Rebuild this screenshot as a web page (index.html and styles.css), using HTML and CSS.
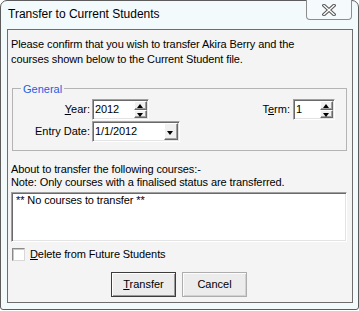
FILE: index.html
```html
<!DOCTYPE html>
<html>
<head>
<meta charset="utf-8">
<link rel="stylesheet" href="styles.css">
</head>
<body>
<div class="window">
  <div class="titlebar">
    <span class="title">Transfer to Current Students</span>
    <div class="close">
      <svg width="14" height="12" viewBox="0 0 14 12">
        <path d="M2 1.5 L12 10.5 M12 1.5 L2 10.5" stroke="#5a5a5a" stroke-width="3.6" stroke-linecap="square" fill="none"/>
        <path d="M2 1.5 L12 10.5 M12 1.5 L2 10.5" stroke="#ffffff" stroke-width="1.4" stroke-linecap="square" fill="none"/>
      </svg>
    </div>
  </div>
  <div class="client">
    <p class="intro">Please confirm that you wish to transfer Akira Berry and the<br>courses shown below to the Current Student file.</p>
    <fieldset class="group">
      <legend>General</legend>
      <div class="row">
        <span class="lbl"><u>Y</u>ear:</span>
        <div class="spin year">
          <span class="val">2012</span>
          <div class="spinbtns">
            <span class="sb up"></span>
            <span class="sb down"></span>
          </div>
        </div>
        <div class="term">
          <span class="tlbl">T<u>e</u>rm:</span>
          <div class="spin termbox">
            <span class="val">1</span>
            <div class="spinbtns">
              <span class="sb up"></span>
              <span class="sb down"></span>
            </div>
          </div>
        </div>
      </div>
      <div class="row row2">
        <span class="lbl">Entry Date:</span>
        <div class="combo">
          <span class="val">1/1/2012</span>
          <span class="dropbtn"></span>
        </div>
      </div>
    </fieldset>
    <p class="note">About to transfer the following courses:-<br>Note: Only courses with a finalised status are transferred.</p>
    <div class="listbox">** No courses to transfer **</div>
    <div class="check">
      <span class="box"></span>
      <span class="clbl"><u>D</u>elete from Future Students</span>
    </div>
    <div class="buttons">
      <div class="btn default"><span><u>T</u>ransfer</span></div>
      <div class="btn"><span>Cancel</span></div>
    </div>
  </div>
</div>
</body>
</html>
```
FILE: styles.css
```css
html, body {
  margin: 0;
  padding: 0;
  background: #ffffff;
}
body {
  font-family: "Liberation Sans", Arial, sans-serif;
  font-size: 11px;
  color: #000;
}
.window {
  width: 359px;
  height: 310px;
  box-sizing: border-box;
  border: 1px solid #5c5c5c;
  border-radius: 7px 7px 3px 3px;
  background: #f3fafc;
  padding: 0 5px 6px 6px;
  display: flex;
  flex-direction: column;
}
.titlebar {
  height: 28px;
  display: flex;
  align-items: flex-start;
  margin: 0 -5px 0 -6px;
  padding: 0 6px 0 7px;
}
.title {
  font-size: 12px;
  line-height: 15px;
  padding-top: 6px;
}
.close {
  margin-left: auto;
  margin-top: -1px;
  width: 46px;
  height: 20px;
  box-sizing: border-box;
  border: 1px solid #8d8d8d;
  border-top: none;
  border-radius: 0 0 4px 4px;
  background: #f5fbfd;
  display: flex;
  align-items: center;
  justify-content: center;
}
.close svg {
  display: block;
  margin-top: 1px;
}
.client {
  height: 274px;
  box-sizing: border-box;
  border: 1px solid #6e6e6e;
  background: #f4f4f4;
  display: flex;
  flex-direction: column;
}
.intro {
  margin: 7px 0 0 3px;
  line-height: 15px;
  letter-spacing: -0.1px;
}
.group {
  margin: 13px 5px 0 4px;
  padding: 3px 0 8px 0;
  border: 1px solid #b4b4b4;
  min-width: 0;
}
.group legend {
  margin-left: 8px;
  padding: 3px 2px 0 2px;
  line-height: 13px;
  color: #1c5fe0;
}
.row {
  display: flex;
  align-items: center;
  height: 21px;
  padding-right: 11px;
}
.row2 {
  margin-top: 1px;
}
.lbl {
  width: 77px;
  text-align: right;
  margin-right: 2px;
  line-height: 13px;
}
.term {
  margin-left: auto;
  display: flex;
  align-items: center;
}
.tlbl {
  margin-right: 3px;
  line-height: 13px;
}
.spin, .combo {
  height: 21px;
  box-sizing: border-box;
  border: 1px solid;
  border-color: #a0a0a0 #ffffff #ffffff #a0a0a0;
  box-shadow: inset 1px 1px 0 #6a6a6a, inset -1px -1px 0 #e3e3e3;
  background: #ffffff;
  display: flex;
  align-items: stretch;
  padding: 1px;
}
.year {
  width: 57px;
}
.termbox {
  width: 42px;
}
.combo {
  width: 88px;
}
.val {
  flex: 1;
  padding-left: 1px;
  line-height: 17px;
  letter-spacing: -0.1px;
}
.spinbtns {
  width: 13px;
  display: flex;
  flex-direction: column;
}
.sb {
  flex: 1;
  box-sizing: border-box;
  background: #f0f0f0;
  border: 1px solid;
  border-color: #ffffff #696969 #696969 #ffffff;
  box-shadow: inset -1px -1px 0 #a0a0a0;
  position: relative;
}
.sb::after {
  content: "";
  position: absolute;
  left: 2px;
  width: 0;
  height: 0;
  border-left: 3.5px solid transparent;
  border-right: 3.5px solid transparent;
}
.sb.up::after {
  top: 2px;
  border-bottom: 4px solid #000;
}
.sb.down::after {
  top: 2px;
  border-top: 4px solid #000;
}
.dropbtn {
  width: 14px;
  box-sizing: border-box;
  background: #f0f0f0;
  border: 1px solid;
  border-color: #ffffff #696969 #696969 #ffffff;
  box-shadow: inset -1px -1px 0 #a0a0a0;
  position: relative;
}
.dropbtn::after {
  content: "";
  position: absolute;
  left: 2px;
  top: 7px;
  border-left: 3.5px solid transparent;
  border-right: 3.5px solid transparent;
  border-top: 4px solid #000;
}
.note {
  margin: 12px 0 0 3px;
  line-height: 13px;
  letter-spacing: -0.1px;
}
.listbox {
  margin: 3px 5px 0 3px;
  height: 50px;
  box-sizing: border-box;
  border: 1px solid;
  border-color: #a0a0a0 #ffffff #ffffff #a0a0a0;
  box-shadow: inset 1px 1px 0 #6a6a6a, inset -1px -1px 0 #e3e3e3;
  background: #ffffff;
  padding: 1px 3px 0 4px;
  line-height: 13px;
  letter-spacing: -0.1px;
}
.check {
  margin: 6px 0 0 4px;
  display: flex;
  align-items: center;
  height: 13px;
}
.box {
  width: 13px;
  height: 13px;
  box-sizing: border-box;
  border: 1px solid;
  border-color: #8a8a8a #d8d8d8 #d8d8d8 #8a8a8a;
  background: #ffffff;
  box-shadow: inset 1px 1px 0 #c8c8c8;
}
.clbl {
  margin-left: 5px;
  line-height: 13px;
  letter-spacing: -0.1px;
}
.buttons {
  margin-top: 11px;
  display: flex;
  justify-content: center;
  gap: 6px;
  padding-right: 2px;
}
.btn {
  width: 65px;
  height: 25px;
  box-sizing: border-box;
  border: 1px solid #adadad;
  background: #ececec;
  box-shadow: inset 1px 1px 0 #fcfcfc, inset -1px -1px 0 #d2d2d2;
  display: flex;
  align-items: center;
  justify-content: center;
  line-height: 13px;
}
.btn.default {
  border: 1px solid #3c3c3c;
  box-shadow: inset 1px 1px 0 #ffffff, inset -1px -1px 0 #9a9a9a;
}
```
